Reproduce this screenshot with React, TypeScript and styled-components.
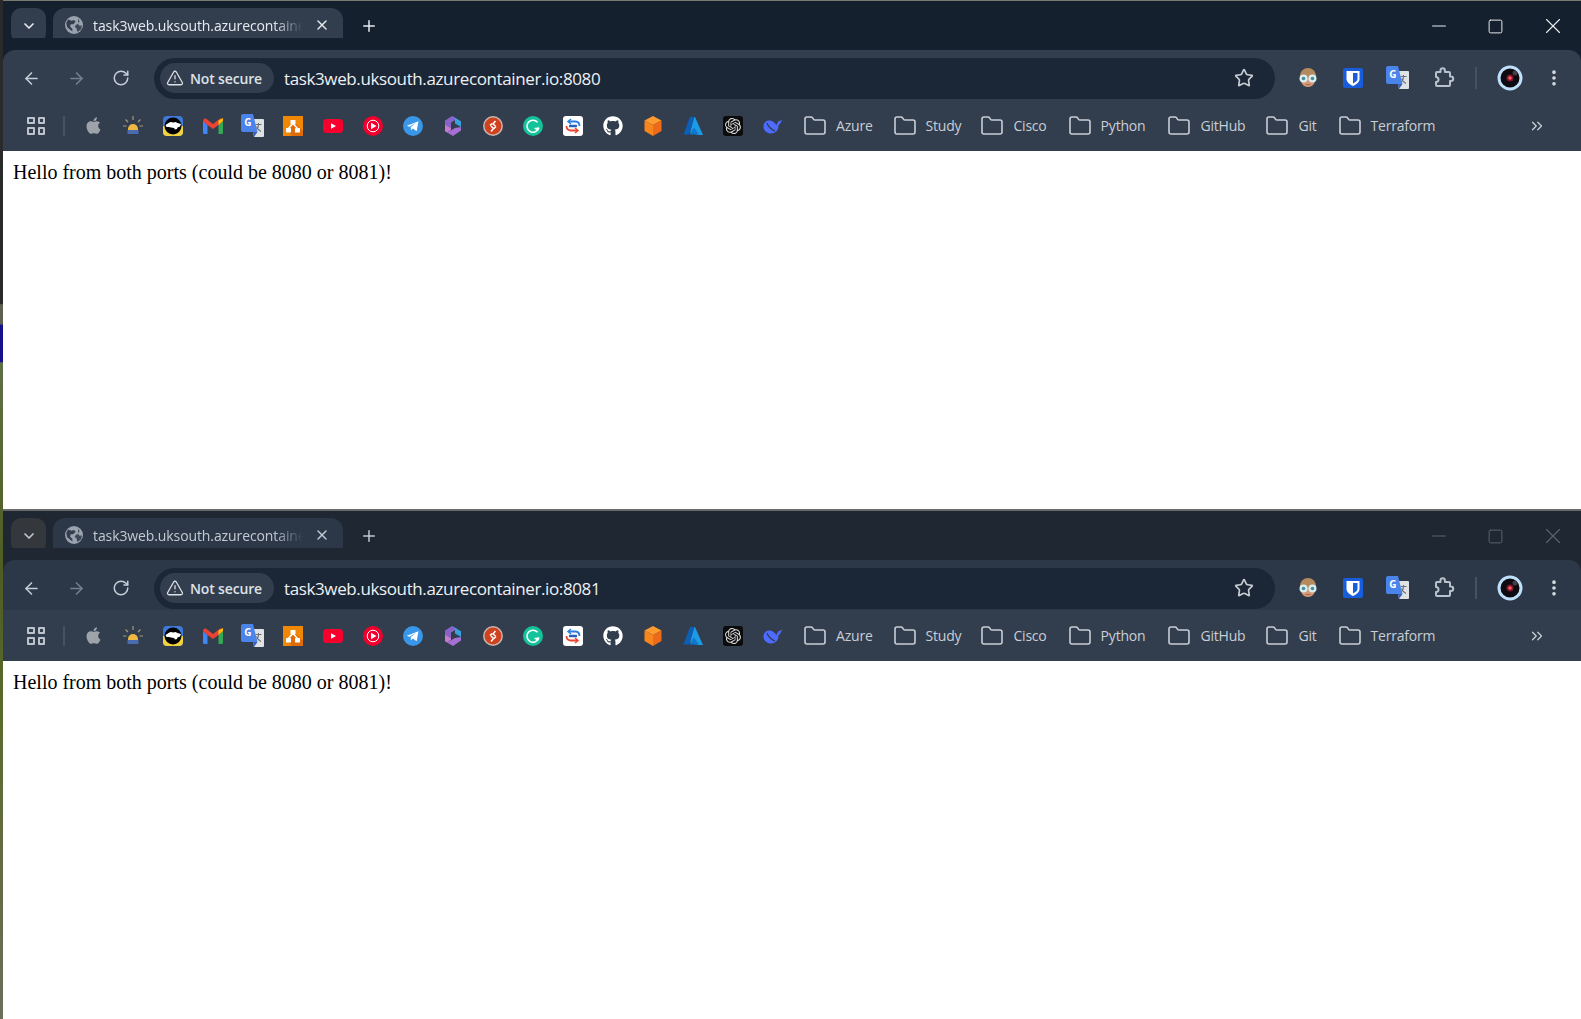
import React from 'react';
import styled, { createGlobalStyle } from 'styled-components';
import {
  ArrowLeft,
  ArrowRight,
  ChevronDown,
  ChevronsRight,
  EllipsisVertical,
  Folder,
  Minus,
  Plus,
  RotateCw,
  Square,
  Star,
  TriangleAlert,
  X,
} from 'lucide-react';
import { FaApple, FaGithub } from 'react-icons/fa';
import { SiOpenai } from 'react-icons/si';

const GlobalStyle = createGlobalStyle`
  html, body {
    margin: 0;
    padding: 0;
    background: #fff;
  }
  * { box-sizing: border-box; }
`;

const Desktop = styled.div`
  width: 1581px;
  height: 1019px;
  overflow: hidden;
  padding-left: 3px;
  background: linear-gradient(180deg, #2a2a2a 0, #2a2a2a 29.800%, #5d6250 29.900%, #5d6250 31.800%, #14108a 31.900%, #14108a 35.500%, #5f6f45 35.600%, #4f5e20 56%, #5a6a2c 70%, #6d6d5c 100%);
  display: flex;
  flex-direction: column;
`;

const Window = styled.div<{ $inactive?: boolean; $height: number }>`
  height: ${p => p.$height}px;
  display: flex;
  flex-direction: column;
  border-top: ${p => (p.$inactive ? '2px solid #6a6a6a' : '1px solid #7a7a72')};
  background: #fff;
`;

const TabStrip = styled.div<{ $inactive?: boolean }>`
  height: 49px;
  flex-shrink: 0;
  display: flex;
  align-items: flex-start;
  padding: 7px 0 0 8px;
  background: ${p => (p.$inactive ? '#1e2732' : '#15202e')};
  color: ${p => (p.$inactive ? '#c3c9d1' : '#e6eaef')};
`;

const TabSearch = styled.div<{ $inactive?: boolean }>`
  width: 35px;
  height: 35px;
  border-radius: 10px;
  background: ${p => (p.$inactive ? '#34373c' : '#323d4e')};
  display: flex;
  align-items: center;
  justify-content: center;
`;

const Tab = styled.div<{ $inactive?: boolean }>`
  position: relative;
  width: 290px;
  height: 42px;
  margin-left: 7px;
  padding: 0 10px 8px 12px;
  border-radius: 12px 12px 0 0;
  background: ${p => (p.$inactive ? '#2c3848' : '#323d4e')};
  display: flex;
  align-items: center;

  &::before,
  &::after {
    content: '';
    position: absolute;
    bottom: 0;
    width: 12px;
    height: 12px;
  }
  &::before {
    left: -12px;
    background: radial-gradient(circle at 0 0, transparent 11.5px, ${p => (p.$inactive ? '#2c3848' : '#323d4e')} 12px);
  }
  &::after {
    right: -12px;
    background: radial-gradient(circle at 100% 0, transparent 11.5px, ${p => (p.$inactive ? '#2c3848' : '#323d4e')} 12px);
  }
`;

const TabTitle = styled.span`
  width: 210px;
  margin-left: 10px;
  overflow: hidden;
  white-space: nowrap;
  font: 14px 'Open Sans', sans-serif;
  letter-spacing: -0.1px;
  -webkit-mask-image: linear-gradient(90deg, #000 86%, transparent 100%);
  mask-image: linear-gradient(90deg, #000 86%, transparent 100%);
`;

const TabClose = styled.div`
  margin-left: 11px;
  display: flex;
`;

const NewTab = styled.div`
  margin: 9px 0 0 17px;
  display: flex;
`;

const WindowControls = styled.div<{ $inactive?: boolean }>`
  margin-left: auto;
  height: 36px;
  display: flex;
  align-items: center;
  color: ${p => (p.$inactive ? '#5d646d' : '#e8ebef')};
`;

const WindowControl = styled.div`
  width: 57px;
  display: flex;
  justify-content: center;
`;

const Toolbar = styled.div<{ $inactive?: boolean }>`
  height: 50px;
  flex-shrink: 0;
  display: flex;
  align-items: center;
  padding: 6px 0 0 17px;
  background: ${p => (p.$inactive ? '#2c3848' : '#323d4e')};
  border-radius: 12px 12px 0 0;
  position: relative;
  box-shadow: 0 -12px 0 0 ${p => (p.$inactive ? '#1e2732' : '#15202e')};
`;

const NavButton = styled.div<{ $dim?: boolean }>`
  width: 22px;
  margin-right: 23px;
  display: flex;
  justify-content: center;
  color: ${p => (p.$dim ? '#75808f' : '#c4ccd6')};
`;

const Omnibox = styled.div`
  width: 1121px;
  height: 41px;
  margin-left: -1px;
  padding: 0 21px 0 6px;
  border-radius: 21px;
  background: #1b2636;
  display: flex;
  align-items: center;
`;

const SecurityChip = styled.div`
  width: 114px;
  height: 30px;
  padding-left: 6px;
  border-radius: 15px;
  background: #323d4e;
  display: flex;
  align-items: center;
  gap: 6px;
  color: #dde2e8;
  font: 600 14px 'Open Sans', sans-serif;
  letter-spacing: -0.15px;
  white-space: nowrap;
`;

const UrlText = styled.span`
  margin-left: 10px;
  color: #eef1f4;
  font: 17px 'Open Sans', sans-serif;
  letter-spacing: -0.38px;
`;

const StarSlot = styled.div`
  margin-left: auto;
  display: flex;
  color: #c6cbd2;
`;

const Extensions = styled.div`
  flex: 1;
  display: flex;
  align-items: center;
`;

const ExtensionSlot = styled.div<{ $width?: number }>`
  width: ${p => p.$width ?? 45}px;
  display: flex;
  justify-content: center;
  color: #b8c1cc;
`;

const ToolbarDivider = styled.div`
  width: 2px;
  height: 22px;
  margin: 0 10px 0 20px;
  background: #47525f;
`;

const BookmarksBar = styled.div`
  height: 51px;
  flex-shrink: 0;
  display: flex;
  align-items: center;
  padding: 0 35px 0 24px;
  background: #323d4e;
`;

const AppsIcon = styled.div`
  width: 18px;
  height: 18px;
  display: grid;
  grid-template-columns: 1fr 1fr;
  gap: 3px;
`;

const AppsCell = styled.span`
  border: 2px solid #bcc3cc;
  border-radius: 1px;
`;

const BarDivider = styled.div`
  width: 2px;
  height: 20px;
  margin: 0 8px 0 18px;
  background: #47525f;
`;

const Favicons = styled.div`
  display: flex;
  margin-right: 10px;
`;

const Favicon = styled.div`
  width: 40px;
  height: 24px;
  flex-shrink: 0;
  display: flex;
  align-items: center;
  justify-content: center;
`;

const FolderItem = styled.div<{ $gap: number }>`
  display: flex;
  align-items: center;
  gap: 9px;
  margin-right: ${p => p.$gap}px;
  color: #c9ced5;
  font: 14px 'Open Sans', sans-serif;
  letter-spacing: -0.2px;
  white-space: nowrap;
`;

const More = styled.div`
  margin-left: auto;
  display: flex;
  color: #ccd2d9;
`;

const Page = styled.div`
  flex: 1;
  padding: 10px;
  background: #fff;
  color: #000;
  font: 20px 'Liberation Serif', 'Times New Roman', serif;
`;

function GlobeIcon() {
  return (
    <svg width="18" height="18" viewBox="0 0 18 18">
      <circle cx="9" cy="9" r="9" fill="#99a2ad" />
      <path d="M3 3.500l3.600 1.200 2.400-.7 1.600 1.700-2.400 2.500H5.700l-.7 2.200 2.400 2.600v2.500L2 11 1.300 7z" fill="#323d4e" />
      <path d="M13 2.600l1.600 2.600-1.700 2.200 1.600 2.300 2.400-.3-.8 3.800-2.800 2.400-1.200-.2-.4-3-2-1.500 1.200-2.200 2.400-.7z" fill="#323d4e" opacity="0.9" />
    </svg>
  );
}

function PuzzleIcon() {
  return (
    <svg width="24" height="24" viewBox="0 0 24 24" fill="none" stroke="currentColor" strokeWidth="2" strokeLinejoin="round">
      <path d="M6 6h3.500V4.500a2.200 2.200 0 0 1 4.400 0V6H18a1 1 0 0 1 1 1v3.500h1a2.200 2.200 0 0 1 0 4.400h-1V19a1 1 0 0 1-1 1H6a1 1 0 0 1-1-1v-3a2.500 2.500 0 0 0 0-5V7a1 1 0 0 1 1-1z" />
    </svg>
  );
}

function TranslateIcon() {
  return (
    <svg width="24" height="24" viewBox="0 0 24 24">
      <path d="M10 5h12a1 1 0 0 1 1 1v16a1 1 0 0 1-1 1H13z" fill="#dfe2e4" />
      <path d="M14.500 10.500h6M17.500 9v1.500c0 3-1.500 5-4 6.500M15.500 12.500c1 2.500 2.500 4 4.500 5" stroke="#6d7175" strokeWidth="1.100" fill="none" />
      <path d="M2 0h10l4.500 18H2a2 2 0 0 1-2-2V2a2 2 0 0 1 2-2z" fill="#4a83ea" />
      <path d="M12 18h4.500L13 23z" fill="#3a5fbd" />
      <text x="3.200" y="12.400" fill="#fff" fontFamily="'Open Sans', sans-serif" fontWeight="700" fontSize="10">G</text>
    </svg>
  );
}

function AvatarIcon() {
  return (
    <svg width="20" height="20" viewBox="0 0 20 20">
      <circle cx="10" cy="8" r="8" fill="#b48a5e" />
      <path d="M3 10h14v2c0 4-3 7-7 7s-7-3-7-7z" fill="#d59a75" />
      <circle cx="5.500" cy="10.500" r="4" fill="#d7eef0" />
      <circle cx="14.500" cy="10.500" r="4" fill="#d7eef0" />
      <circle cx="5.500" cy="10.500" r="1.800" fill="#4e8b95" />
      <circle cx="14.500" cy="10.500" r="1.800" fill="#4e8b95" />
      <path d="M7 16h6c-1 1.500-5 1.500-6 0z" fill="#a8674c" />
    </svg>
  );
}

function BitwardenIcon() {
  return (
    <svg width="20" height="20" viewBox="0 0 20 20">
      <rect width="20" height="20" rx="2" fill="#175ddc" />
      <path d="M3.500 3h13v8c0 3.500-3.500 5.500-6.500 7-3-1.500-6.500-3.500-6.500-7z" fill="#fff" />
      <path d="M10 5h4.500v6c0 2-2.300 3.300-4.500 4.500z" fill="#175ddc" />
    </svg>
  );
}

function ProfileIcon() {
  return (
    <svg width="26" height="26" viewBox="0 0 26 26">
      <circle cx="13" cy="13" r="11" fill="#0d0a10" stroke="#bfe0fb" strokeWidth="3" />
      <circle cx="18" cy="8" r="2.500" fill="#5a5560" opacity="0.7" />
      <circle cx="13" cy="13" r="3.500" fill="#7d1530" />
      <circle cx="13" cy="13" r="1.800" fill="#ff5a5a" />
    </svg>
  );
}

function BellIcon() {
  return (
    <svg width="20" height="20" viewBox="0 0 20 20">
      <path d="M10 0v4M2.500 3.500l2.500 2.500M17.500 3.500l-2.500 2.500M0 10h3.500M16.500 10H20" stroke="#a59a76" strokeWidth="1.200" />
      <path d="M5 13a5 5 0 0 1 10 0v1H5z" fill="#f0b840" />
      <rect x="4.500" y="14" width="11" height="4" fill="#4a6bb0" />
    </svg>
  );
}

function UkraineIcon() {
  return (
    <svg width="20" height="20" viewBox="0 0 20 20">
      <rect width="20" height="20" rx="4" fill="#3f79d9" />
      <path d="M0 10h20v6a4 4 0 0 1-4 4H4a4 4 0 0 1-4-4z" fill="#f3d33c" />
      <circle cx="10" cy="10" r="8.500" fill="#000" />
      <path d="M2.500 9l3-2 2-1 3 .5 2-.5 2 1 3.500 1-1 2.500-2.500 1-.5 1.500-2 .5-1-1.500-3-.5L6 11 3.500 11z" fill="#fff" />
    </svg>
  );
}

function GmailIcon() {
  return (
    <svg width="20" height="16" viewBox="0 0 20 16">
      <path d="M0 3v11.500A1.500 1.500 0 0 0 1.500 16H4.500V7z" fill="#4285f4" />
      <path d="M15.500 7v9h3a1.500 1.500 0 0 0 1.500-1.500V3z" fill="#34a853" />
      <path d="M0 3c0-2 2-3 3.500-2L10 6l6.500-5C18 0 20 1 20 3l-4.500 4L10 11 4.500 7z" fill="#ea4335" />
      <path d="M15.500 2.500L20 0v3l-4.500 4z" fill="#fbbc04" />
    </svg>
  );
}

function DrawioIcon() {
  return (
    <svg width="20" height="20" viewBox="0 0 20 20">
      <rect width="20" height="20" fill="#f08705" />
      <path d="M20 20H9l-4-5 5-10 10 10z" fill="#df6c0c" />
      <path d="M10 7.500L5 13M10 7.500l5 5.500" stroke="#fff" strokeWidth="1.500" />
      <rect x="7.500" y="4" width="5" height="4.500" rx="0.600" fill="#fff" />
      <rect x="3" y="12" width="5" height="4.500" rx="0.600" fill="#fff" />
      <rect x="12" y="12" width="5" height="4.500" rx="0.600" fill="#fff" />
    </svg>
  );
}

function YoutubeIcon() {
  return (
    <svg width="20" height="14" viewBox="0 0 20 14">
      <rect width="20" height="14" rx="3.500" fill="#f6002d" />
      <path d="M8 4.300L13 7l-5 2.700z" fill="#fff" />
    </svg>
  );
}

function YoutubeMusicIcon() {
  return (
    <svg width="20" height="20" viewBox="0 0 20 20">
      <circle cx="10" cy="10" r="10" fill="#f2002d" />
      <circle cx="10" cy="10" r="5.800" fill="none" stroke="#fff" strokeWidth="1" />
      <path d="M8 6.800L13.500 10 8 13.200z" fill="#fff" />
    </svg>
  );
}

function TelegramIcon() {
  return (
    <svg width="20" height="20" viewBox="0 0 20 20">
      <circle cx="10" cy="10" r="10" fill="#3a96e8" />
      <path d="M3.800 9.800l11.700-4.600-1.900 10-3.700-2.700-1.900 1.800-.3-3 5.300-4.600-6.500 4z" fill="#fff" />
    </svg>
  );
}

function CopilotIcon() {
  return (
    <svg width="20" height="20" viewBox="0 0 20 20">
      <path d="M2 4.500L9 0l5 3-6 3.500V12l-6-3.500z" fill="#8a63c9" />
      <path d="M9 0l9 5.200V11l-6-3.500V3z" fill="#3aa0dc" />
      <path d="M18 11v3.500L10 20l-6-3.500L12 12z" fill="#a56fd6" />
      <path d="M2 8.500L8 12v2l-4 2.500-2-1.200z" fill="#c37ad0" />
      <path d="M8 7l4-1.500V11l-4 2z" fill="#323d4e" />
    </svg>
  );
}

function AnyDeskIcon() {
  return (
    <svg width="20" height="20" viewBox="0 0 20 20">
      <circle cx="10" cy="10" r="9.200" fill="#d0411f" stroke="#c7b7b0" strokeWidth="1.500" />
      <path d="M12.500 5L10 8l2.500 2M8 10l2.500 2.500L8 15.500M7 9.500l2-2M11 12.500l2-2" stroke="#fff" strokeWidth="1.500" fill="none" />
    </svg>
  );
}

function GrammarlyIcon() {
  return (
    <svg width="20" height="20" viewBox="0 0 20 20">
      <circle cx="10" cy="10" r="10" fill="#15c39a" />
      <path d="M14.500 6.300A6 6 0 1 0 15.500 12.500H11.500" fill="none" stroke="#fff" strokeWidth="1.600" />
      <path d="M15.500 10.500v4l-3-1z" fill="#fff" />
    </svg>
  );
}

function SyncIcon() {
  return (
    <svg width="20" height="20" viewBox="0 0 20 20">
      <rect width="20" height="20" rx="3" fill="#fff" />
      <path d="M6 5.500h6.500A4.500 4.500 0 0 1 16.500 10" fill="none" stroke="#2a7de1" strokeWidth="1.800" />
      <path d="M8 3L5 5.500 8 8" fill="none" stroke="#2a7de1" strokeWidth="1.500" />
      <path d="M14 14.500H7.500A4.500 4.500 0 0 1 3.500 10" fill="none" stroke="#e8442e" strokeWidth="1.800" />
      <path d="M12 12l3 2.500L12 17" fill="none" stroke="#e8442e" strokeWidth="1.500" />
      <rect x="6" y="8.800" width="8" height="2.500" rx="0.500" fill="#2a5fc0" />
    </svg>
  );
}

function CubeIcon() {
  return (
    <svg width="20" height="20" viewBox="0 0 20 20">
      <path d="M10 0l8.500 4.500L10 9 1.500 4.500z" fill="#ff9a2e" />
      <path d="M1.500 4.500L10 9v11l-8.500-5z" fill="#f8861c" />
      <path d="M18.500 4.500L10 9v11l8.500-5z" fill="#ee6a1b" />
    </svg>
  );
}

function AzureIcon() {
  return (
    <svg width="20" height="20" viewBox="0 0 20 20">
      <path d="M7 1h5L6 18.500H.5z" fill="#0d5fb5" />
      <path d="M12 1h-.5L7 16.500 15 19h5z" fill="#1d9be6" />
      <path d="M11 11.500l-4.500 7h9.500l-2.500-3.500-2.500-3.500z" fill="#1076cc" />
    </svg>
  );
}

const ChatBadge = styled.div`
  width: 20px;
  height: 20px;
  border-radius: 3px;
  background: #0b0b0b;
  display: flex;
  align-items: center;
  justify-content: center;
`;

function DeepseekIcon() {
  return (
    <svg width="20" height="16" viewBox="0 0 20 16">
      <path d="M19.500 1.500c-1 .5-1.500 1-2.300 1.300-.7-.2-1.500 0-2 .8L13.500 7c-1.500-1.500-3-4-6-4.500C4 2 .8 4 .5 8c-.3 3.500 2.500 7 6.500 7.500 3 .3 6-1 7.500-3.500 1-1.500 1-3.500.8-4.500l1.700-1.500 1-2z" fill="#4d6bfe" />
      <path d="M4 5c1 3 4 6.500 8 8" stroke="#323d4e" strokeWidth="1.200" fill="none" />
    </svg>
  );
}

const favicons = [
  <FaApple size={19} color="#9ea3a9" />,
  <BellIcon />,
  <UkraineIcon />,
  <GmailIcon />,
  <TranslateIcon />,
  <DrawioIcon />,
  <YoutubeIcon />,
  <YoutubeMusicIcon />,
  <TelegramIcon />,
  <CopilotIcon />,
  <AnyDeskIcon />,
  <GrammarlyIcon />,
  <SyncIcon />,
  <FaGithub size={20} color="#fff" />,
  <CubeIcon />,
  <AzureIcon />,
  <ChatBadge><SiOpenai size={16} color="#d8d8d8" /></ChatBadge>,
  <DeepseekIcon />,
];

const folders = [
  { name: 'Azure', gap: 20 },
  { name: 'Study', gap: 19 },
  { name: 'Cisco', gap: 21 },
  { name: 'Python', gap: 22 },
  { name: 'GitHub', gap: 20 },
  { name: 'Git', gap: 21 },
  { name: 'Terraform', gap: 0 },
];

function Browser({ url, inactive, height }: { url: string; inactive?: boolean; height: number }) {
  return (
    <Window $inactive={inactive} $height={height}>
      <TabStrip $inactive={inactive}>
        <TabSearch $inactive={inactive}>
          <ChevronDown size={16} strokeWidth={2.5} />
        </TabSearch>
        <Tab $inactive={inactive}>
          <GlobeIcon />
          <TabTitle>task3web.uksouth.azurecontainer.io:{url}</TabTitle>
          <TabClose>
            <X size={16} strokeWidth={2.2} />
          </TabClose>
        </Tab>
        <NewTab>
          <Plus size={18} strokeWidth={2} />
        </NewTab>
        <WindowControls $inactive={inactive}>
          <WindowControl><Minus size={22} strokeWidth={1.1} /></WindowControl>
          <WindowControl><Square size={17} strokeWidth={1.4} /></WindowControl>
          <WindowControl><X size={26} strokeWidth={1} /></WindowControl>
        </WindowControls>
      </TabStrip>
      <Toolbar $inactive={inactive}>
        <NavButton><ArrowLeft size={19} strokeWidth={2} /></NavButton>
        <NavButton $dim><ArrowRight size={19} strokeWidth={2} /></NavButton>
        <NavButton><RotateCw size={18} strokeWidth={2} /></NavButton>
        <Omnibox>
          <SecurityChip>
            <TriangleAlert size={18} strokeWidth={1.7} />
            Not secure
          </SecurityChip>
          <UrlText>task3web.uksouth.azurecontainer.io:{url}</UrlText>
          <StarSlot><Star size={20} strokeWidth={2} /></StarSlot>
        </Omnibox>
        <Extensions>
          <ExtensionSlot $width={66}><AvatarIcon /></ExtensionSlot>
          <ExtensionSlot $width={24}><BitwardenIcon /></ExtensionSlot>
          <ExtensionSlot $width={66}><TranslateIcon /></ExtensionSlot>
          <ExtensionSlot $width={24}><PuzzleIcon /></ExtensionSlot>
          <ToolbarDivider />
          <ExtensionSlot><ProfileIcon /></ExtensionSlot>
          <ExtensionSlot $width={44}><EllipsisVertical size={20} strokeWidth={2.4} color="#d6dbe1" /></ExtensionSlot>
        </Extensions>
      </Toolbar>
      <BookmarksBar>
        <AppsIcon>
          <AppsCell /><AppsCell /><AppsCell /><AppsCell />
        </AppsIcon>
        <BarDivider />
        <Favicons>
          {favicons.map((icon, i) => (
            <Favicon key={i}>{icon}</Favicon>
          ))}
        </Favicons>
        {folders.map(f => (
          <FolderItem key={f.name} $gap={f.gap}>
            <Folder size={24} strokeWidth={1.6} />
            {f.name}
          </FolderItem>
        ))}
        <More><ChevronsRight size={18} strokeWidth={1.6} /></More>
      </BookmarksBar>
      <Page>Hello from both ports (could be 8080 or 8081)!</Page>
    </Window>
  );
}

export default function App() {
  return (
    <>
      <GlobalStyle />
      <Desktop>
        <Browser url="8080" height={509} />
        <Browser url="8081" inactive height={510} />
      </Desktop>
    </>
  );
}
